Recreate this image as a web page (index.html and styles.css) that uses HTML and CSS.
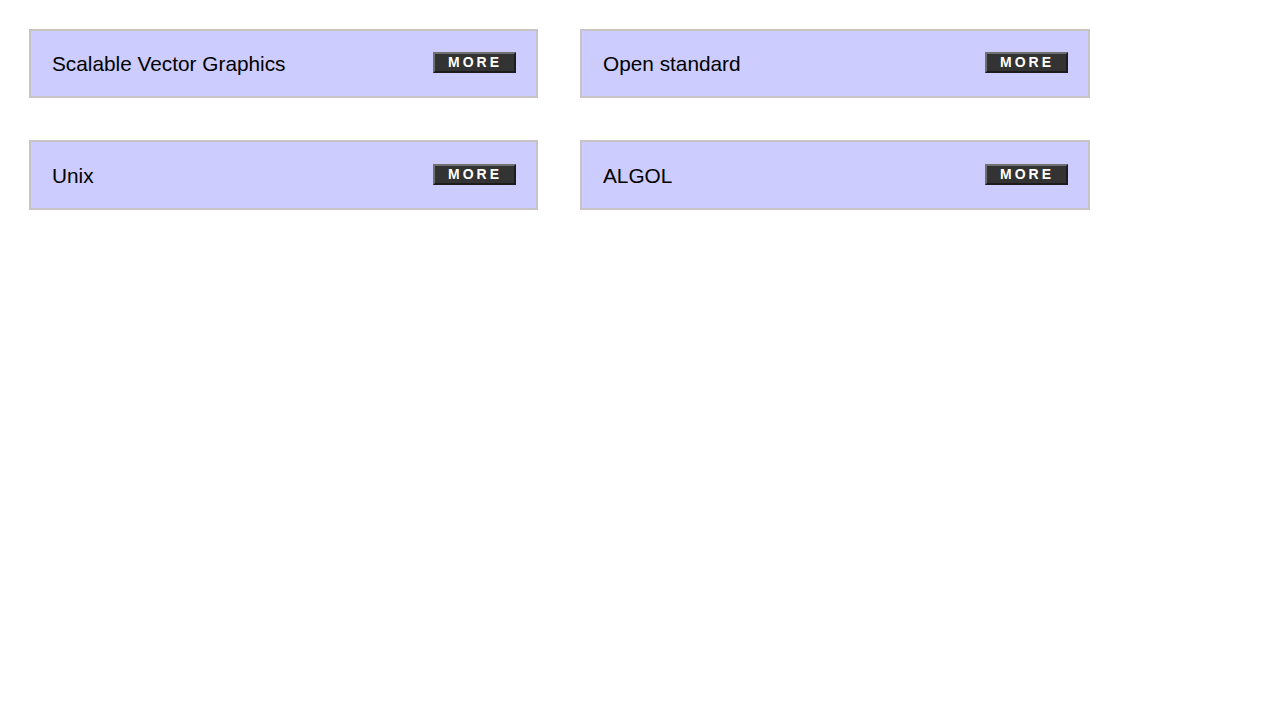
FILE: index.html
```html
<!DOCTYPE html>
<html>
<head>
<meta charset="utf-8">
<link rel="stylesheet" href="styles.css">
</head>
<body>
<div class="grid">
  <div class="card"><span class="label">Scalable Vector Graphics</span><button class="more">MORE</button></div>
  <div class="card"><span class="label">Open standard</span><button class="more">MORE</button></div>
  <div class="card"><span class="label">Unix</span><button class="more">MORE</button></div>
  <div class="card"><span class="label">ALGOL</span><button class="more">MORE</button></div>
</div>
</body>
</html>
```
FILE: styles.css
```css
html, body {
  margin: 0;
  padding: 0;
  background: #ffffff;
  font-family: "Liberation Sans", Arial, sans-serif;
}
.grid {
  display: grid;
  grid-template-columns: 509px 510px;
  grid-template-rows: 69px 70px;
  column-gap: 42px;
  row-gap: 42px;
  padding: 29px 0 0 29px;
}
.card {
  box-sizing: border-box;
  background: #ccccff;
  border: 2px solid #c8c4c6;
  display: flex;
  align-items: center;
  justify-content: space-between;
  padding: 0 20px 0 21px;
}
.label {
  font-size: 20.8px;
  color: #000;
  margin-top: 1px;
}
.more {
  box-sizing: border-box;
  width: 83px;
  height: 21px;
  margin: 0 0 2px 0;
  padding: 0 0 0 1px;
  background: #333333;
  border: 2px solid;
  border-color: #707070 #1c1c1c #1c1c1c #707070;
  color: #ffffff;
  font-family: "Liberation Sans", Arial, sans-serif;
  font-weight: bold;
  font-size: 14px;
  letter-spacing: 3px;
  line-height: 15px;
  text-align: center;
}
```
